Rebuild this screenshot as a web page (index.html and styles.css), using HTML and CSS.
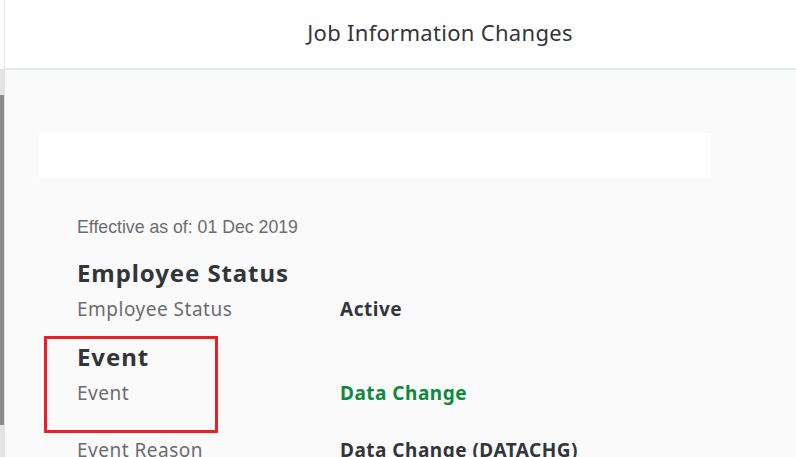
FILE: index.html
```html
<!DOCTYPE html>
<html lang="en">

<head>
    <meta charset="UTF-8">
    <meta name="viewport" content="width=device-width, initial-scale=1.0">
    <title>Job Information Changes</title>
    <link rel="stylesheet" href="styles.css">
</head>

<body>
    <div class="page">
        <div class="side-strip">
            <div class="strip-top"></div>
            <div class="strip-light"></div>
            <div class="strip-dark"></div>
            <div class="strip-light strip-fill"></div>
        </div>
        <div class="dialog">
            <header class="dialog-header">
                <h1>Job Information Changes</h1>
            </header>
            <main class="dialog-body">
                <div class="blank-bar"></div>
                <section class="details">
                    <p class="effective">Effective as of: 01 Dec 2019</p>

                    <h2>Employee Status</h2>
                    <div class="row">
                        <span class="label">Employee Status</span>
                        <span class="value">Active</span>
                    </div>

                    <h2 class="group-gap">Event</h2>
                    <div class="row">
                        <span class="label">Event</span>
                        <span class="value green">Data Change</span>
                    </div>

                    <div class="row row-gap">
                        <span class="label">Event Reason</span>
                        <span class="value">Data Change (DATACHG)</span>
                    </div>

                    <!-- highlight box drawn over the Event group -->
                    <div class="highlight"></div>
                </section>
            </main>
        </div>
    </div>
</body>

</html>
```

FILE: styles.css
```css
body {
    margin: 0;
    padding: 0;
    overflow: hidden;
    background-color: #fafafa;
    font-family: "Noto Sans", Arial, sans-serif;
}

.page {
    display: flex;
    height: 457px;
    overflow: hidden;
}

.side-strip {
    display: flex;
    flex-direction: column;
    width: 4px;
    flex-shrink: 0;
    border-right: 1px solid #e4e4e4;
}

.strip-top {
    height: 69px;
    flex-shrink: 0;
    background-color: #fff;
}

.strip-light {
    height: 26px;
    flex-shrink: 0;
    background-color: #e3e3e3;
}

.strip-dark {
    height: 330px;
    flex-shrink: 0;
    background-color: #8c8c8c;
}

.strip-fill {
    flex: 1;
}

.dialog {
    width: 870px;
    flex-shrink: 0;
    display: flex;
    flex-direction: column;
}

.dialog-header {
    height: 64px;
    padding-bottom: 4px;
    flex-shrink: 0;
    background-color: #fff;
    border-bottom: 2px solid #e1e9f1;
    display: flex;
    align-items: center;
    justify-content: center;
}

.dialog-header h1 {
    margin: 0;
    font-size: 22px;
    letter-spacing: 0.3px;
    font-weight: normal;
    color: #32363a;
}

.dialog-body {
    flex: 1;
    background-color: #fafafa;
    padding-top: 63px;
}

.blank-bar {
    margin-left: 34px;
    width: 672px;
    height: 44px;
    background-color: #fff;
}

.details {
    position: relative;
    padding-left: 72px;
    padding-top: 40px;
}

.effective {
    margin: 0 0 22px 0;
    font-family: "Liberation Sans", Arial, sans-serif;
    font-size: 17.7px;
    line-height: 20px;
    color: #6a6d70;
}

h2 {
    margin: 0 0 8px 0;
    font-size: 24px;
    letter-spacing: 0.9px;
    line-height: 28px;
    font-weight: bold;
    color: #32363a;
}

.group-gap {
    margin-top: 20px;
}

.row {
    display: flex;
    height: 28px;
    align-items: center;
    font-size: 19px;
    letter-spacing: 0.5px;
}

.row-gap {
    margin-top: 29px;
}

.label {
    width: 263px;
    color: #6a6d70;
}

.value {
    font-weight: bold;
    color: #32363a;
}

.green {
    color: #0e8a3c;
}

.highlight {
    position: absolute;
    left: 39px;
    top: 159px;
    width: 168px;
    height: 91px;
    border: 3px solid #e8202a;
}
```
